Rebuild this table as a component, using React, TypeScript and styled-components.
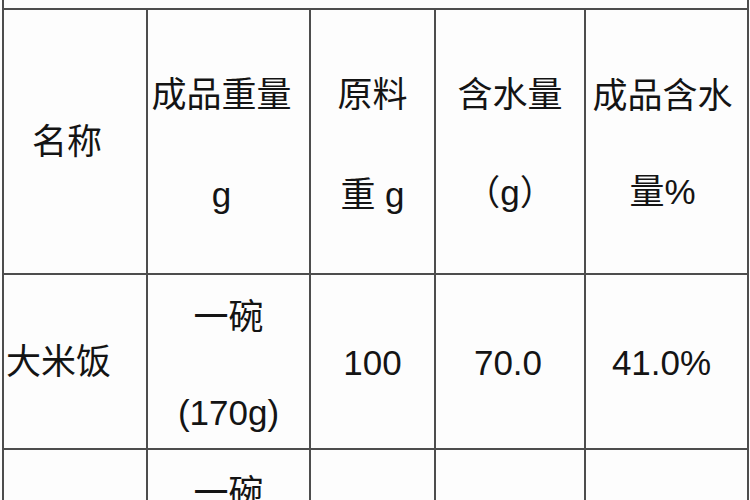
import React from 'react';
import styled, { createGlobalStyle } from 'styled-components';

const GlobalStyle = createGlobalStyle`
    html, body {
        margin: 0;
        padding: 0;
        background: #fff;
    }
    #root {
        width: 750px;
        height: 500px;
        overflow: hidden;
    }
`;

const LINE = '2px solid #4d4d4d';

const Sheet = styled.div`
    width: 750px;
    height: 500px;
    overflow: hidden;
    background: #fdfdfd;
    padding-left: 2px;
    box-sizing: border-box;
`;

const Table = styled.table`
    border-collapse: collapse;
    table-layout: fixed;
    width: 745px;
    font-family: "Liberation Sans", "Noto Sans CJK SC", sans-serif;
    font-size: 35px;
    color: #141414;
`;

const TailRow = styled.tr`
    height: 9px;
`;

const TailCell = styled.td`
    border-left: ${LINE};
    border-right: ${LINE};
    border-bottom: ${LINE};
    padding: 0;
`;

const Row = styled.tr<{ $height: number }>`
    height: ${p => p.$height}px;
`;

// $shift > 0 pushes text left, < 0 pushes it right; $drop moves it down
const Cell = styled.td<{ $align?: 'left' | 'center'; $shift?: number; $drop?: number }>`
    border: ${LINE};
    padding: ${p => (p.$drop || 0) * 2}px
        ${p => (p.$shift && p.$shift > 0 ? p.$shift : 0)}px 0
        ${p => (p.$shift && p.$shift < 0 ? -p.$shift : 0)}px;
    text-align: ${p => p.$align || 'center'};
    vertical-align: middle;
    line-height: 46px;
    white-space: nowrap;
`;

const TopCell = styled(Cell)`
    vertical-align: top;
    padding-top: 20px;
`;

const Stack = styled.div<{ $gap: number }>`
    display: flex;
    flex-direction: column;
    align-items: center;
    gap: ${p => p.$gap}px;
`;

function Lines(props: { items: string[]; gap: number }) {
    return (
        <Stack $gap={props.gap}>
            {props.items.map((t, i) => (
                <span key={i}>{t}</span>
            ))}
        </Stack>
    );
}

export default function App() {
    return (
        <>
            <GlobalStyle />
            <Sheet>
                <Table>
                    <colgroup>
                        <col style={{ width: 144 }} />
                        <col style={{ width: 163 }} />
                        <col style={{ width: 125 }} />
                        <col style={{ width: 150 }} />
                        <col style={{ width: 163 }} />
                    </colgroup>
                    <tbody>
                        <TailRow>
                            <TailCell colSpan={5} />
                        </TailRow>
                        <Row $height={265}>
                            <Cell $shift={16}>名称</Cell>
                            <Cell $shift={14} $drop={3}><Lines gap={54} items={['成品重量', 'g']} /></Cell>
                            <Cell $drop={3}><Lines gap={54} items={['原料', '重 g']} /></Cell>
                            <Cell $drop={2}><Lines gap={52} items={['含水量', '（g）']} /></Cell>
                            <Cell $shift={8} $drop={2}><Lines gap={50} items={['成品含水', '量%']} /></Cell>
                        </Row>
                        <Row $height={175}>
                            <Cell $align="left" $shift={-2}>大米饭</Cell>
                            <Cell $drop={3}><Lines gap={50} items={['一碗', '(170g)']} /></Cell>
                            <Cell $drop={1}>100</Cell>
                            <Cell $shift={4} $drop={1}>70.0</Cell>
                            <Cell $shift={10} $drop={1}>41.0%</Cell>
                        </Row>
                        <Row $height={175}>
                            <Cell />
                            <TopCell><Lines gap={50} items={['一碗']} /></TopCell>
                            <Cell />
                            <Cell />
                            <Cell />
                        </Row>
                    </tbody>
                </Table>
            </Sheet>
        </>
    );
}
